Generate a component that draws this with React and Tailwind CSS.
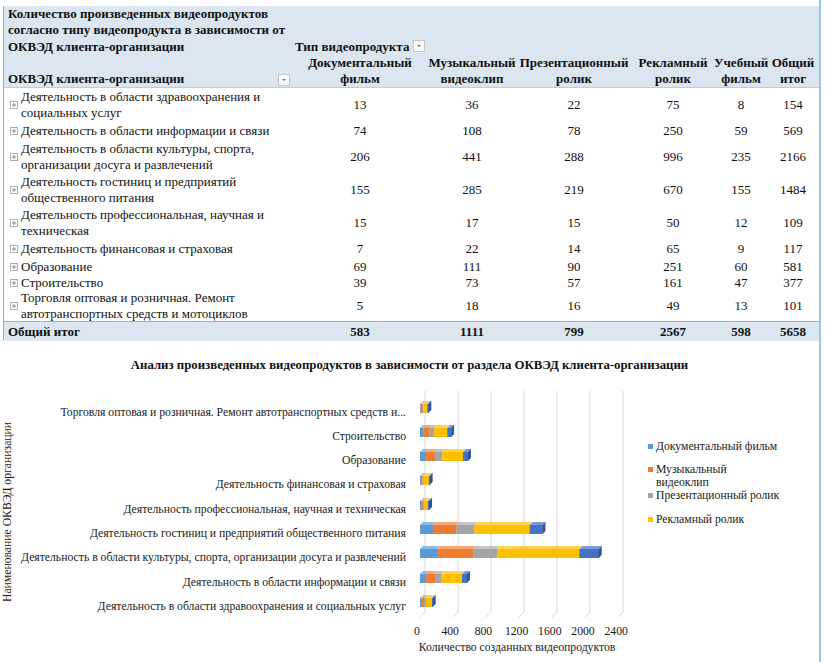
import React from "react";

const COLS = "grid grid-cols-[288px_136px_88px_116px_82px_54px_50px]";

const ROWS = [
  { l: ["Деятельность в области здравоохранения и", "социальных услуг"], v: [13, 36, 22, 75, 8, 154], hc: "h-[33px]" },
  { l: ["Деятельность в области информации и связи"], v: [74, 108, 78, 250, 59, 569], hc: "h-[20px]" },
  { l: ["Деятельность в области культуры, спорта,", "организации досуга и развлечений"], v: [206, 441, 288, 996, 235, 2166], hc: "h-[32px]" },
  { l: ["Деятельность гостиниц и предприятий", "общественного питания"], v: [155, 285, 219, 670, 155, 1484], hc: "h-[34px]" },
  { l: ["Деятельность профессиональная, научная и", "техническая"], v: [15, 17, 15, 50, 12, 109], hc: "h-[32px]" },
  { l: ["Деятельность финансовая и страховая"], v: [7, 22, 14, 65, 9, 117], hc: "h-[18px]" },
  { l: ["Образование"], v: [69, 111, 90, 251, 60, 581], hc: "h-[16px]" },
  { l: ["Строительство"], v: [39, 73, 57, 161, 47, 377], hc: "h-[17px]" },
  { l: ["Торговля оптовая и розничная. Ремонт", "автотранспортных средств и мотоциклов"], v: [5, 18, 16, 49, 13, 101], hc: "h-[31px]" },
];

const TOTAL = [583, 1111, 799, 2567, 598, 5658];

const CATS = [
  { l: "Торговля оптовая и розничная. Ремонт автотранспортных средств и...", v: [5, 18, 16, 49, 13], c: 413 },
  { l: "Строительство", v: [39, 73, 57, 161, 47], c: 437 },
  { l: "Образование", v: [69, 111, 90, 251, 60], c: 461 },
  { l: "Деятельность финансовая и страховая", v: [7, 22, 14, 65, 9], c: 485 },
  { l: "Деятельность профессиональная, научная и техническая", v: [15, 17, 15, 50, 12], c: 510 },
  { l: "Деятельность гостиниц и предприятий общественного питания", v: [155, 285, 219, 670, 155], c: 534 },
  { l: "Деятельность в области культуры, спорта, организации досуга и развлечений", v: [206, 441, 288, 996, 235], c: 558 },
  { l: "Деятельность в области информации и связи", v: [74, 108, 78, 250, 59], c: 583 },
  { l: "Деятельность в области здравоохранения и социальных услуг", v: [13, 36, 22, 75, 8], c: 607 },
];

const COLORS = [
  ["#5b9bd5", "#8fbbe3"],
  ["#ed7d31", "#f3a772"],
  ["#a5a5a5", "#c4c4c4"],
  ["#ffc000", "#ffd452"],
  ["#4472c4", "#7b9bd6"],
];

function Dd() {
  return (
    <span className="inline-flex h-[12px] w-[12px] shrink-0 items-center justify-center border border-[#c8c8c8] bg-[#f7f7f7]">
      <span className="h-0 w-0 border-x-[2px] border-t-[2px] border-x-transparent border-t-[#777]" />
    </span>
  );
}

function Plus() {
  return (
    <svg width="8" height="8" viewBox="0 0 8 8" className="shrink-0">
      <rect x="0.5" y="0.5" width="7" height="7" fill="#fff" stroke="#b0b0b0" />
      <path d="M2 4h4M4 2v4" stroke="#8a8a8a" strokeWidth="1" />
    </svg>
  );
}

function Chart() {
  const k = 0.0825;
  const X0 = 420;
  const d = 3;
  const grid = [];
  for (let n = 0; n <= 6; n++) {
    const gx = 425 + 33 * n;
    grid.push(
      <path key={n} d={`M${gx} 392V613L${gx - 5} 618`} stroke="#d9d9d9" strokeWidth="1" fill="none" />
    );
  }
  return (
    <svg width="640" height="288" viewBox="0 374 640 288" fontFamily="Liberation Serif, Times New Roman, serif" className="shrink-0">
      {grid}
      {CATS.map((cat, ci) => {
        const y0 = cat.c - 8;
        const y1 = cat.c + 1;
        let x = X0;
        const parts = [];
        cat.v.forEach((val, i) => {
          const w = val * k;
          parts.push(
            <g key={i}>
              <polygon points={`${x},${y0} ${x + d},${y0 - d} ${x + w + d},${y0 - d} ${x + w},${y0}`} fill={COLORS[i][1]} />
              <rect x={x} y={y0} width={w + 0.3} height={y1 - y0} fill={COLORS[i][0]} />
            </g>
          );
          x += w;
        });
        parts.push(
          <polygon key="side" points={`${x},${y0} ${x + d},${y0 - d} ${x + d},${y1 - d} ${x},${y1}`} fill="#2f5597" />
        );
        return (
          <g key={ci}>
            <text x="406" y={cat.c + 4} textAnchor="end" fontSize="11.7" fill="#1a1a1a">
              {cat.l}
            </text>
            {parts}
          </g>
        );
      })}
      {[0, 400, 800, 1200, 1600, 2000, 2400].map((t, n) => (
        <text key={t} x={417 + 33.2 * n} y="636" textAnchor="middle" fontSize="11.7" fill="#1a1a1a">
          {t}
        </text>
      ))}
      <text x="517" y="652" textAnchor="middle" fontSize="11.7" fill="#1a1a1a">
        Количество созданных видеопродуктов
      </text>
      <text transform="translate(11 513) rotate(-90)" textAnchor="middle" fontSize="11.7" fill="#1a1a1a">
        Наименование ОКВЭД организации
      </text>
    </svg>
  );
}

function LegendItem({ color, children, cls }) {
  return (
    <div className={`flex items-start gap-[3px] ${cls}`}>
      <span className={`mt-[4px] h-[5px] w-[5px] shrink-0 ${color}`} />
      <span className="whitespace-nowrap text-[11.7px] leading-[13px] text-[#1a1a1a]">{children}</span>
    </div>
  );
}

export default function App() {
  return (
    <div className="flex h-[662px] w-[825px] overflow-hidden bg-white text-[#111] [font-family:'Liberation_Serif','Times_New_Roman',serif]">
      <div className="flex w-[819px] flex-col">
        {/* Pivot table */}
        <div className="ml-[3px] mt-[6px] border-l border-[#a6a6a6] text-[13px]">
          <div className="h-[82px] border-b border-[#b8cce4] bg-[#dce6f1] font-bold leading-[16.4px]">
            <div className={`${COLS} h-[49px]`}>
              <div className="whitespace-nowrap pl-[4px]">
                Количество произведенных видеопродуктов
                <br />
                согласно типу видеопродукта в зависимости от
                <br />
                ОКВЭД клиента-организации
              </div>
              <div className="flex items-end gap-[4px] pl-[3px]">
                <span className="whitespace-nowrap">Тип видеопродукта</span>
                <span className="mb-[3px]">
                  <Dd />
                </span>
              </div>
              <div className="col-span-5" />
            </div>
            <div className={`${COLS} h-[32px]`}>
              <div className="flex items-end justify-between pl-[4px]">
                <span className="whitespace-nowrap">ОКВЭД клиента-организации</span>
                <span className="mb-[2px] mr-[2px]">
                  <Dd />
                </span>
              </div>
              <div className="whitespace-nowrap text-center">
                Документальный
                <br />
                фильм
              </div>
              <div className="whitespace-nowrap text-center">
                Музыкальный
                <br />
                видеоклип
              </div>
              <div className="whitespace-nowrap text-center">
                Презентационный
                <br />
                ролик
              </div>
              <div className="whitespace-nowrap text-center">
                Рекламный
                <br />
                ролик
              </div>
              <div className="whitespace-nowrap text-center">
                Учебный
                <br />
                фильм
              </div>
              <div className="whitespace-nowrap text-center">
                Общий
                <br />
                итог
              </div>
            </div>
          </div>

          {ROWS.map((r, i) => (
            <div key={i} className={`${COLS} ${r.hc}`}>
              <div className="flex items-center pl-[6px]">
                <Plus />
                <div className="ml-[3px] whitespace-nowrap leading-[16px]">
                  {r.l.map((t, j) => (
                    <div key={j}>{t}</div>
                  ))}
                </div>
              </div>
              {r.v.map((n, j) => (
                <div key={j} className="flex items-center justify-center">
                  {n}
                </div>
              ))}
            </div>
          ))}

          <div className={`${COLS} h-[19px] border-t border-[#95b3d7] bg-[#dce6f1] font-bold`}>
            <div className="flex items-center pl-[4px]">Общий итог</div>
            {TOTAL.map((n, j) => (
              <div key={j} className="flex items-center justify-center">
                {n}
              </div>
            ))}
          </div>
        </div>

        {/* Chart */}
        <div className="flex flex-1 flex-col border-t border-[#ececec]">
          <div className="pt-[16px] text-center text-[12.8px] font-bold leading-[16px]">
            Анализ произведенных видеопродуктов в зависимости от раздела ОКВЭД клиента-организации
          </div>
          <div className="flex">
            <Chart />
            <div className="flex flex-col pl-[8px] pt-[67px]">
              <LegendItem color="bg-[#5b9bd5]" cls="">
                Документальный фильм
              </LegendItem>
              <LegendItem color="bg-[#ed7d31]" cls="mt-[10px]">
                Музыкальный
                <br />
                видеоклип
              </LegendItem>
              <LegendItem color="bg-[#a5a5a5]" cls="mt-0">
                Презентационный ролик
              </LegendItem>
              <LegendItem color="bg-[#ffc000]" cls="mt-[11px]">
                Рекламный ролик
              </LegendItem>
            </div>
          </div>
        </div>
      </div>
      <div className="w-[2px] bg-[#9dc3e6]" />
    </div>
  );
}
